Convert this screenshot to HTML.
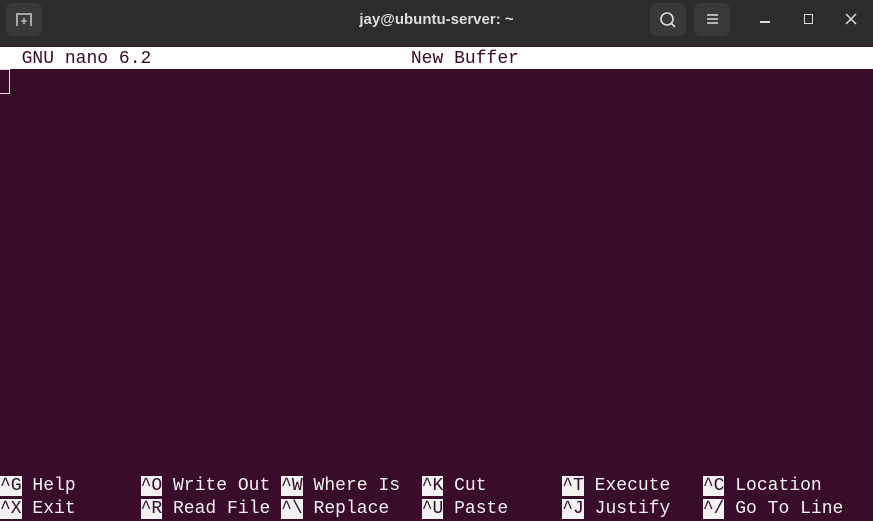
<!DOCTYPE html>
<html><head><style>
body{margin:0;width:873px;height:521px;overflow:hidden;background:#380c2a;font-family:"Liberation Mono",monospace;}
#hdr{position:absolute;left:0;top:0;width:873px;height:46px;background:#2c2c2c;border-bottom:1px solid #3a1530;}
#hdr .t{position:absolute;left:0;width:873px;top:11px;text-align:center;color:#ddd;font:bold 15px "Liberation Sans",sans-serif;}
.btn{position:absolute;top:3px;width:36px;height:33px;border-radius:7px;background:#393939;}
.term{position:absolute;font-size:18px;letter-spacing:0.01px;white-space:pre;line-height:22.5px;color:#f2f2f2}
#title{position:absolute;left:0;top:47px;width:873px;height:22px;background:#fff;}
.k{background:#f2f2f2;color:#380c2a}
</style></head><body>
<div id="hdr">
<div class="btn" style="left:6px"></div>
<svg style="position:absolute;left:15px;top:12px" width="18" height="16"><path d="M2 14V2h14v12" fill="none" stroke="#ccc" stroke-width="1.5"/><path d="M9 6v6M6 9h6" stroke="#ccc" stroke-width="1.3"/></svg>
<div class="t">jay@ubuntu-server: ~</div>
<div class="btn" style="left:650px"></div>
<svg style="position:absolute;left:658px;top:10px" width="20" height="20"><circle cx="9" cy="9" r="6" fill="none" stroke="#ddd" stroke-width="1.6"/><path d="M13 13l4 4" stroke="#ddd" stroke-width="1.6"/></svg>
<div class="btn" style="left:694px"></div>
<svg style="position:absolute;left:705px;top:12px" width="16" height="14"><path d="M2 3h11M2 7h11M2 11h11" stroke="#ddd" stroke-width="1.5"/></svg>
<div style="position:absolute;left:760px;top:21px;width:10px;height:1.5px;background:#ddd"></div>
<div style="position:absolute;left:804px;top:14px;width:7px;height:8px;border:1.5px solid #ddd"></div>
<svg style="position:absolute;left:845px;top:13px" width="12" height="12"><path d="M1 1l10 10M11 1L1 11" stroke="#ddd" stroke-width="1.5"/></svg>
</div>
<div id="title"></div>
<div class="term" style="left:0;top:48px;color:#380c2a">  GNU nano 6.2                        New Buffer</div>
<div style="position:absolute;left:0;top:69px;width:9px;height:23px;border:1px solid #ddd;border-left:none"></div>
<div class="term" style="left:0;top:475px"><span class="k">^G</span> Help      <span class="k">^O</span> Write Out <span class="k">^W</span> Where Is  <span class="k">^K</span> Cut       <span class="k">^T</span> Execute   <span class="k">^C</span> Location
<span class="k">^X</span> Exit      <span class="k">^R</span> Read File <span class="k">^\</span> Replace   <span class="k">^U</span> Paste     <span class="k">^J</span> Justify   <span class="k">^/</span> Go To Line</div>
</body></html>
